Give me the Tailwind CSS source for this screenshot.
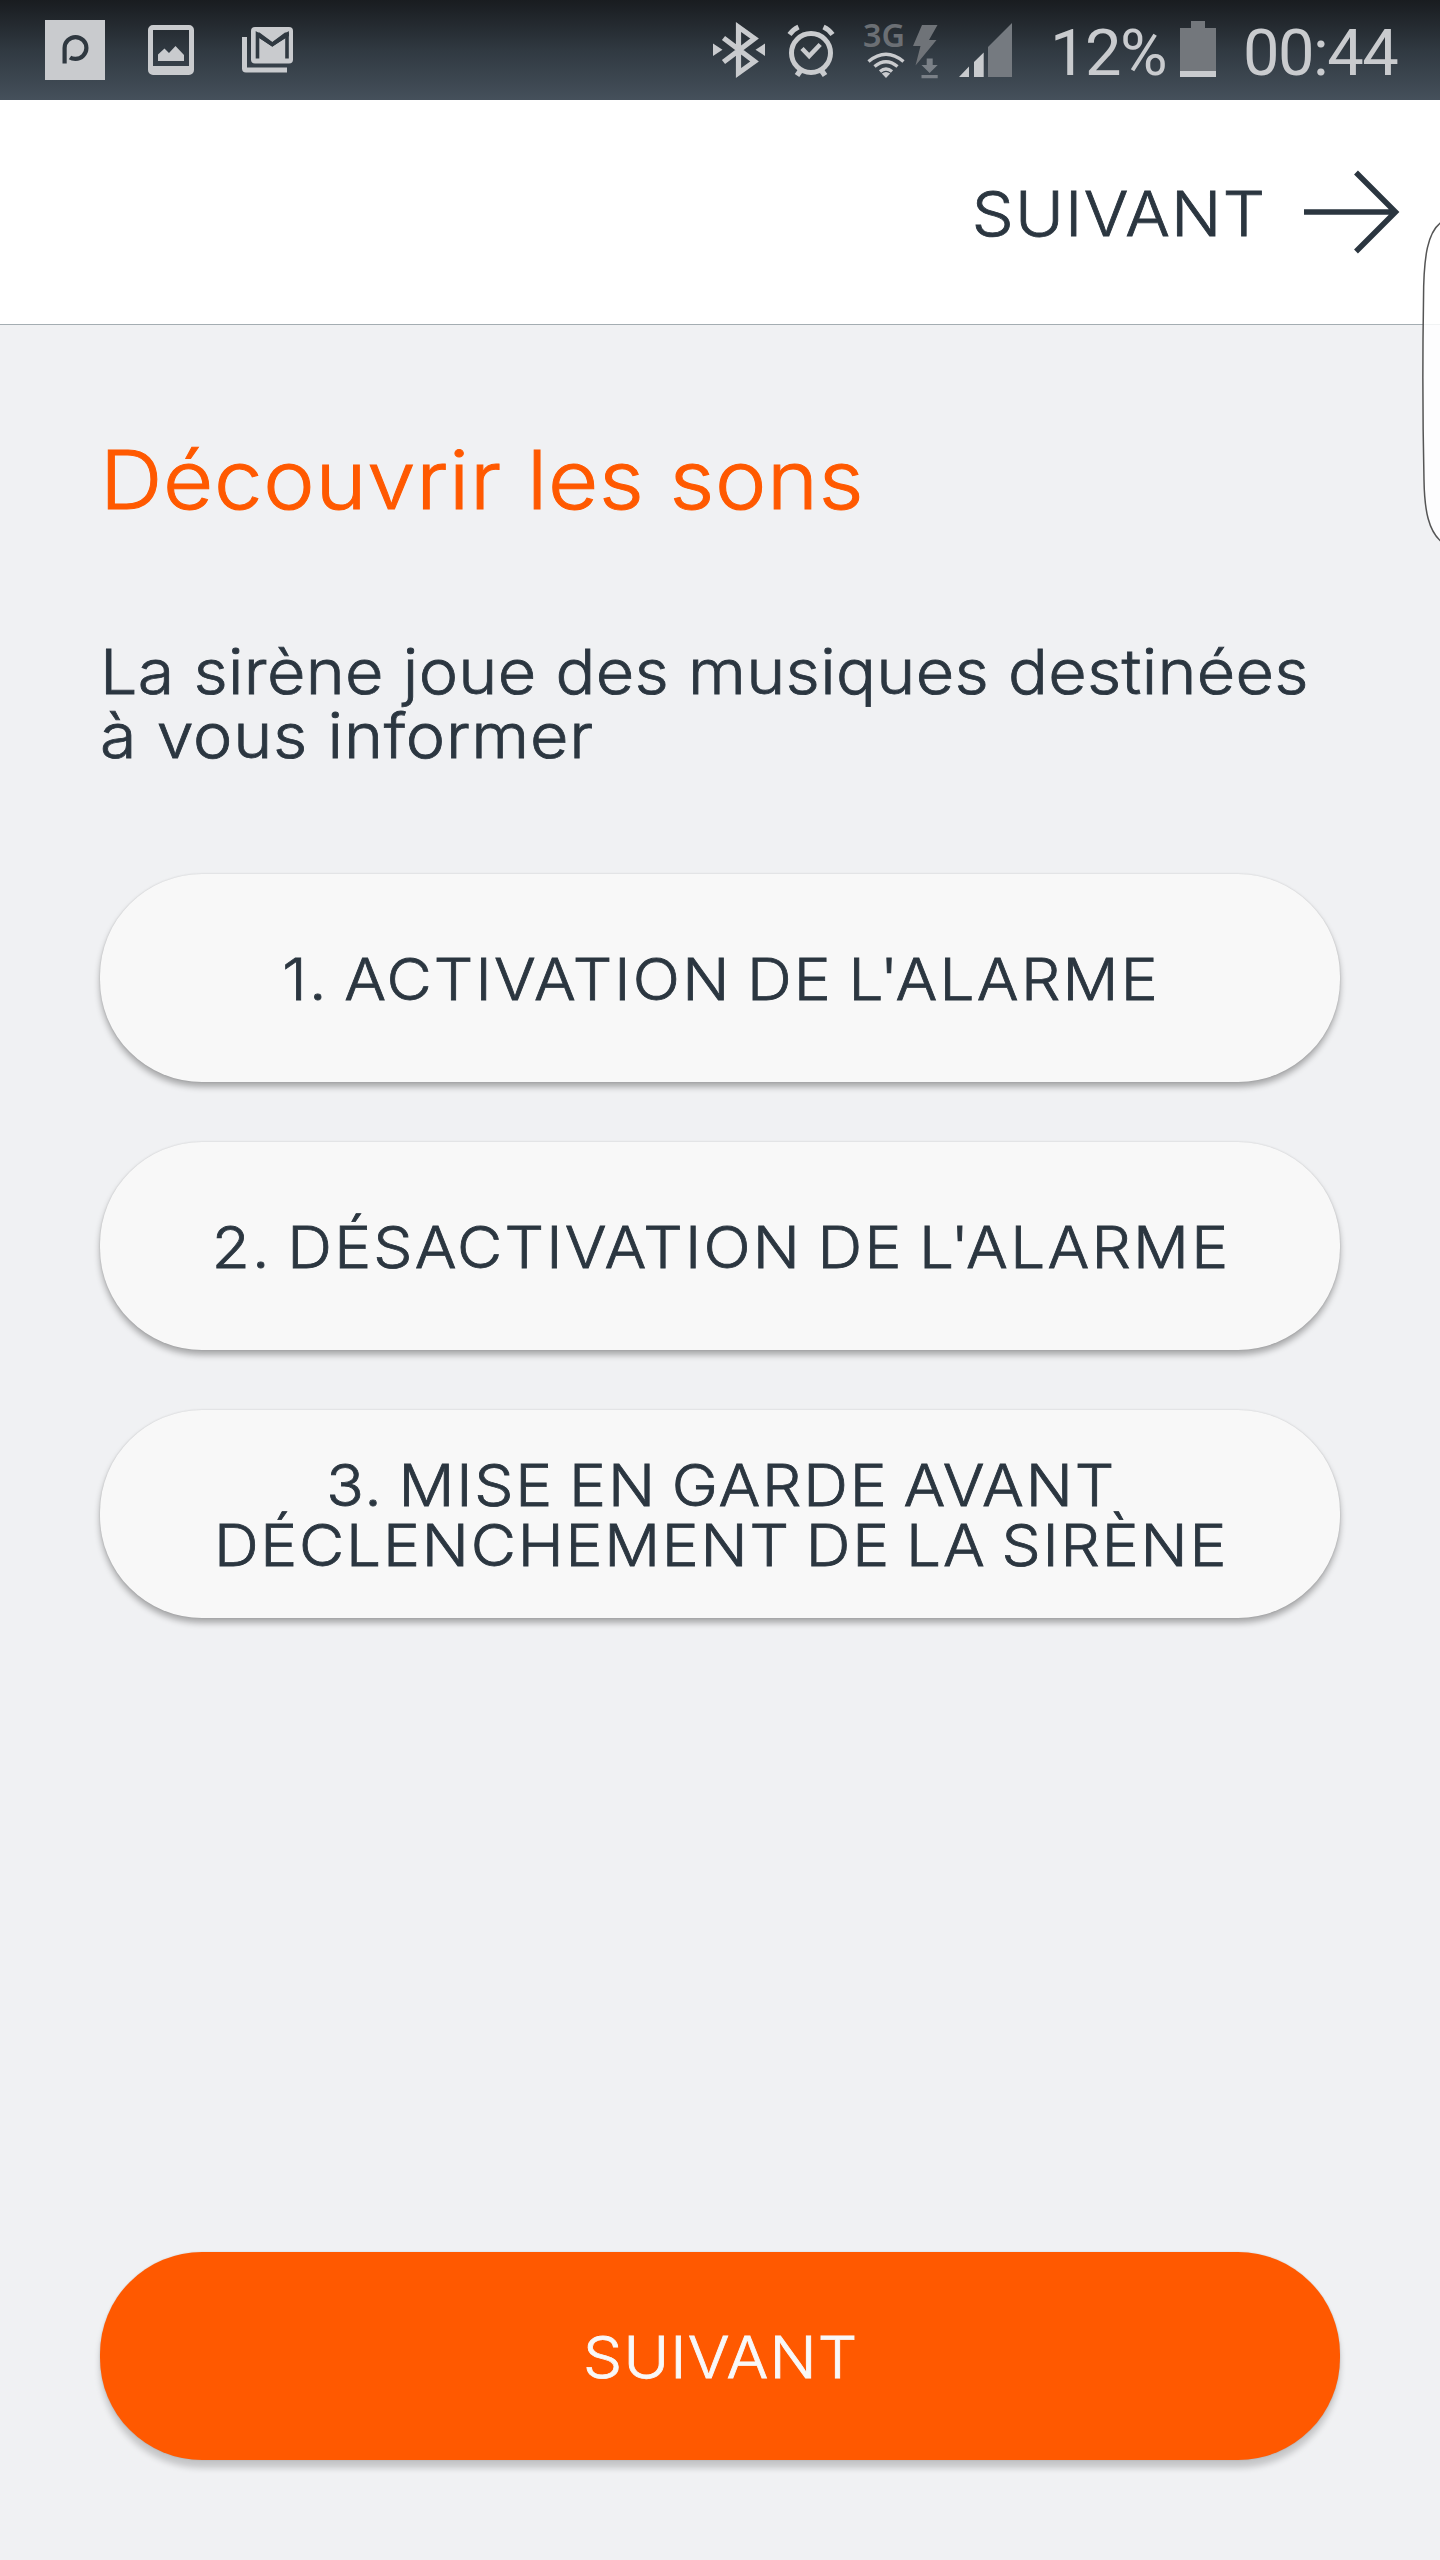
<!DOCTYPE html>
<html lang="fr">
<head>
    <meta charset="UTF-8">
    <meta name="viewport" content="width=device-width, initial-scale=1.0">
    <title>Découvrir les sons</title>
    <script src="https://cdn.jsdelivr.net/npm/@tailwindcss/browser@4"></script>
</head>
<body class="relative flex flex-col w-[1440px] h-[2560px] overflow-hidden bg-[#f0f1f3] font-['Inter',sans-serif] font-light text-[#2b3640]">

    <!-- Status bar -->
    <div class="flex items-center h-[100px] shrink-0 bg-linear-to-b from-[#191c20] via-[#303941] to-[#45505b] font-['Roboto',sans-serif] text-[#c9cbce]">
        <!-- Notifications -->
        <svg class="w-[300px] h-[100px] shrink-0" viewBox="0 0 300 100" fill="#c9cbce">
            <rect x="45" y="20" width="60" height="60"/>
            <path d="M64.600 63.500V48A10.900 10.900 0 1 1 75.400 58.900Q72 58.900 70 57.500" fill="none" stroke="#2f3840" stroke-width="4.200"/>
            <path fill-rule="evenodd" d="M153 25h36a5 5 0 0 1 5 5v40a5 5 0 0 1-5 5h-36a5 5 0 0 1-5-5V30a5 5 0 0 1 5-5zM153 30v36h36V30z"/>
            <path d="M158 54.500l6.500-6 4.500 4.500 6.500-7 8.500 9V61h-26z"/>
            <rect x="251" y="27" width="42" height="36.500" rx="4"/>
            <path d="M257.500 58.500V34.500L272.300 44.500 287 34.500V58.500" fill="none" stroke="#303941" stroke-width="3.600"/>
            <path d="M256 32.500h3.500l12.800 9.500 12.700-9.500h4v3.500l-16.700 10.500L256 36z" fill="#303941"/>
            <path d="M242 37h5v30.500h40V72.500H246a4 4 0 0 1-4-4z"/>
        </svg>

        <!-- System icons -->
        <svg class="ml-auto w-[350px] h-[100px] shrink-0" viewBox="690 0 350 100" fill="#c9cbce">
            <path d="M713 43.500v12.500l9.500-6.200zM765 43.500v12.500l-9.500-6.200z"/>
            <path d="M723.500 38L754.500 61.500 738.500 73V27L754.500 38.500 723.500 62" fill="none" stroke="#c9cbce" stroke-width="5.200"/>
            <g fill="none" stroke="#c9cbce">
                <circle cx="811" cy="53" r="19.500" stroke-width="5"/>
                <path d="M802 48.500l7.200 7.500 11-11.500" stroke-width="4.500"/>
                <path d="M789.500 34.500q3.500-5 9-7.500M832.500 34.500q-3.500-5-9-7.500" stroke-width="5"/>
                <path d="M800.500 70.500l-3.500 5M821.500 70.500l3.500 5" stroke-width="5.500"/>
            </g>
            <text x="863" y="47" font-family="Noto Sans" font-weight="600" font-size="33" textLength="42" lengthAdjust="spacingAndGlyphs" fill="#6b6f74">3G</text>
            <g fill="none" stroke="#c9cbce" stroke-width="3.400">
                <path d="M868.500 61.500q17.500-14.500 35 0"/>
                <path d="M874.500 66.500q11.500-9.500 23 0"/>
                <path d="M880 71.500q6-5 12 0"/>
            </g>
            <path d="M881.800 73.500q4.200-3 8.400 0l-4.200 4.500z"/>
            <path d="M922 25h15.500L929 40h7.500l-21 25.500 5-19.500H913z" fill="#6f7378"/>
            <path d="M926.700 58.500h6v6.500h5l-8.100 8-8.100-8h5.200zM921.500 75h16.200v3.200h-16.200z" fill="#7a8087"/>
            <path d="M959 77l10-10.500V77zM974 62l9.700-9.500V77H974z"/>
            <path d="M988 47l24-24v54h-24z" fill="#757a80"/>
        </svg>

        <div class="flex items-center shrink-0 pr-[44px]">
            <span class="w-[130px] pl-[10px] pt-[6px] text-[65px] leading-none font-normal tracking-[-1.500px]">12%</span>
            <svg class="ml-[10px] w-[36px] h-[100px]" viewBox="1180 0 36 100">
                <path d="M1191 21h14v7h11v43h-36V28h11z" fill="#73777c"/>
                <path d="M1180 71h36v6h-36z" fill="#c9cbce"/>
            </svg>
            <span class="w-[180px] pl-[27px] pt-[6px] text-[65px] leading-none font-normal tracking-[-1.500px]">00:44</span>
        </div>
    </div>

    <!-- Header -->
    <header class="flex items-center justify-end h-[225px] shrink-0 pr-[39px] bg-white border-b border-[#a4adb2]">
        <span class="pt-[4px] origin-right scale-x-107 text-[62px] leading-none tracking-[1.200px] [-webkit-text-stroke:0.8px]">SUIVANT</span>
        <svg class="ml-[38px] w-[97px] h-[84px]" viewBox="0 0 97 84" fill="none" stroke="#2b3640" stroke-width="5.500">
            <path d="M0 42h92M52 2.500L91.500 42 52 81.500"/>
        </svg>
    </header>

    <main class="flex flex-col grow px-[100px] pt-[115px] pb-[100px]">
        <h1 class="origin-left scale-x-107 w-fit text-[81px] leading-[80px] tracking-[0.700px] text-[#ff5900] [-webkit-text-stroke:1px]">Découvrir les sons</h1>

        <p class="mt-[120px] origin-left scale-x-107 w-fit text-[62px] leading-[64px] whitespace-nowrap [-webkit-text-stroke:0.8px]">
            <span class="block tracking-[0.300px]">La sirène joue des musiques destinées</span>
            <span class="block tracking-[0.750px]">à vous informer</span>
        </p>

        <div class="flex flex-col gap-[60px] mt-[106px] text-[58px] leading-[60px] text-center [-webkit-text-stroke:0.8px]">
            <button class="h-[208px] pt-[2px] rounded-[102px] bg-[#f8f8f8] shadow-[0_5px_6px_rgba(0,0,0,0.3),0_0_2px_rgba(0,0,0,0.15)]">
                <span class="inline-block pl-[2px] scale-x-107 tracking-[2.100px] [word-spacing:-4px]">1. ACTIVATION DE L'ALARME</span>
            </button>
            <button class="h-[208px] pt-[2px] rounded-[102px] bg-[#f8f8f8] shadow-[0_5px_6px_rgba(0,0,0,0.3),0_0_2px_rgba(0,0,0,0.15)]">
                <span class="inline-block pl-[2px] scale-x-107 tracking-[2.100px] [word-spacing:-4px]">2. DÉSACTIVATION DE L'ALARME</span>
            </button>
            <button class="h-[208px] pt-[2px] rounded-[102px] bg-[#f8f8f8] shadow-[0_5px_6px_rgba(0,0,0,0.3),0_0_2px_rgba(0,0,0,0.15)]">
                <span class="inline-block pl-[2px] scale-x-107 tracking-[1.700px] [word-spacing:-4px]">3. MISE EN GARDE AVANT<br>DÉCLENCHEMENT DE LA SIRÈNE</span>
            </button>
        </div>

        <button class="mt-auto h-[208px] pt-[2px] rounded-[102px] bg-[#ff5900] text-[58px] leading-[60px] text-[#f8f8f8] shadow-[0_8px_6px_rgba(0,0,0,0.18),0_0_2px_rgba(0,0,0,0.15)] [-webkit-text-stroke:0.8px]">
            <span class="inline-block pl-[2px] scale-x-107 tracking-[1.100px]">SUIVANT</span>
        </button>
    </main>

    <!-- Edge panel handle -->
    <svg class="absolute right-0 top-[215px] w-[20px] h-[335px]" viewBox="1420 215 20 335">
        <path d="M1441 222.500C1428 232 1423.500 255 1423.500 300Q1422 390 1424 480C1424.500 512 1429 531 1441 541.500" fill="#fff" fill-opacity="0.850" stroke="#555" stroke-width="1.500"/>
    </svg>
</body>
</html>
